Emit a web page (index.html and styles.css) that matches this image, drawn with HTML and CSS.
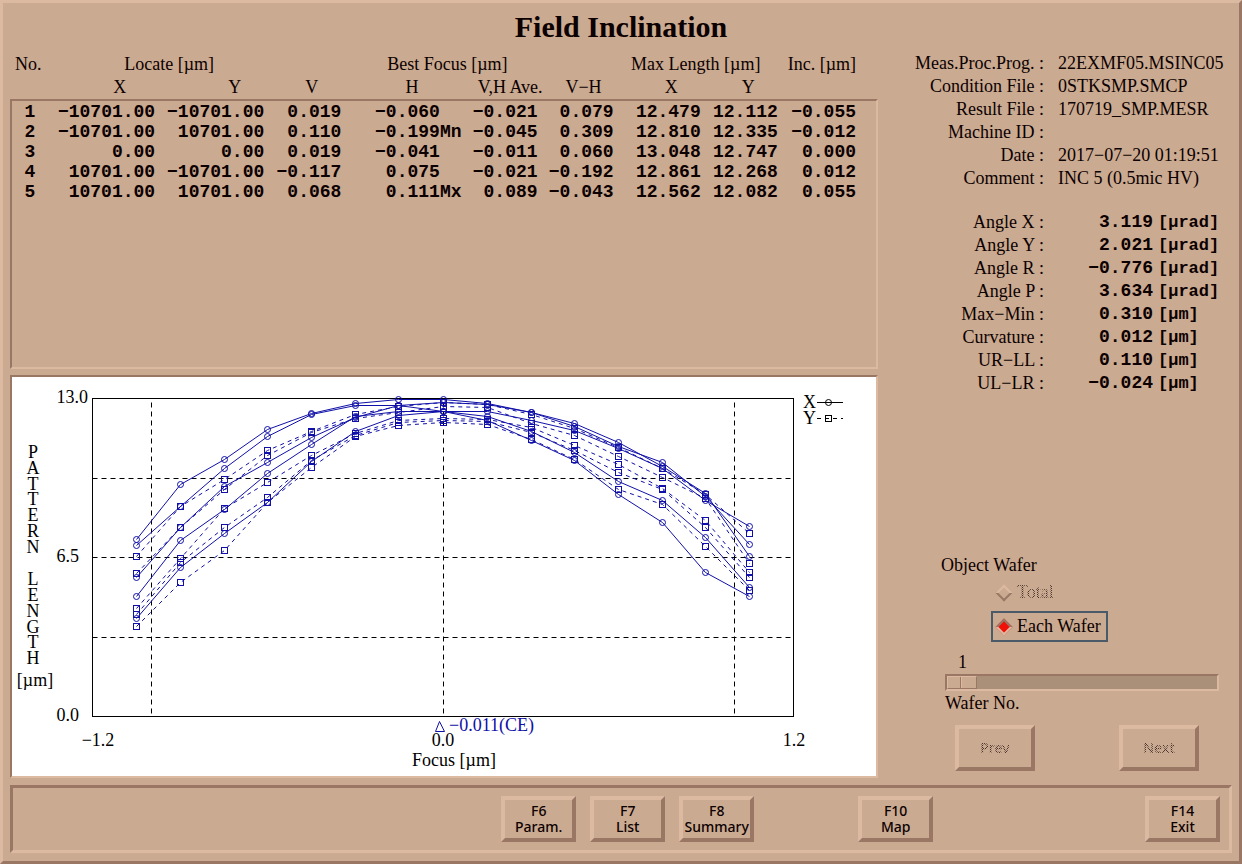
FILE: index.html
```html
<!DOCTYPE html>
<html lang="en">
<head>
<meta charset="utf-8">
<title>Field Inclination</title>
<link rel="stylesheet" href="styles.css">
</head>
<body>
<div class="window">
  <h1 class="title">Field Inclination</h1>

  <main class="main">
    <div class="left">
      <section class="results">
        <div class="results-box"></div>
        <table class="results-table">
          <colgroup>
            <col class="c-no"><col class="c-lx"><col class="c-ly"><col class="c-v"><col class="c-h">
            <col class="c-ave"><col class="c-vh"><col class="c-mx"><col class="c-my"><col class="c-inc">
          </colgroup>
          <thead>
            <tr>
              <th class="h-no">No.</th>
              <th class="h-locate" colspan="2">Locate [µm]</th>
              <th class="h-focus" colspan="4">Best Focus [µm]</th>
              <th class="h-length" colspan="2">Max Length [µm]</th>
              <th class="h-inc">Inc. [µm]</th>
            </tr>
            <tr class="sub">
              <th></th>
              <th class="p-wide">X</th>
              <th class="p-mid">Y</th>
              <th class="p-mid">V</th>
              <th class="p-flag">H</th>
              <th>V,H Ave.</th>
              <th class="p-small">V−H</th>
              <th class="p-mid">X</th>
              <th class="p-mid">Y</th>
              <th></th>
            </tr>
          </thead>
          <tbody>
            <tr><td>1</td><td>−10701.00</td><td>−10701.00</td><td>0.019</td><td>−0.060<span class="flag"></span></td><td>−0.021</td><td>0.079</td><td>12.479</td><td>12.112</td><td>−0.055</td></tr>
            <tr><td>2</td><td>−10701.00</td><td>10701.00</td><td>0.110</td><td>−0.199<span class="flag">Mn</span></td><td>−0.045</td><td>0.309</td><td>12.810</td><td>12.335</td><td>−0.012</td></tr>
            <tr><td>3</td><td>0.00</td><td>0.00</td><td>0.019</td><td>−0.041<span class="flag"></span></td><td>−0.011</td><td>0.060</td><td>13.048</td><td>12.747</td><td>0.000</td></tr>
            <tr><td>4</td><td>10701.00</td><td>−10701.00</td><td>−0.117</td><td>0.075<span class="flag"></span></td><td>−0.021</td><td>−0.192</td><td>12.861</td><td>12.268</td><td>0.012</td></tr>
            <tr><td>5</td><td>10701.00</td><td>10701.00</td><td>0.068</td><td>0.111<span class="flag">Mx</span></td><td>0.089</td><td>−0.043</td><td>12.562</td><td>12.082</td><td>0.055</td></tr>
          </tbody>
        </table>
      </section>

      <section class="chart">
        <svg class="chart-svg" viewBox="12 377 864 399" role="img" aria-label="Pattern length against focus">
          <defs>
            <marker id="dot" markerUnits="userSpaceOnUse" markerWidth="9" markerHeight="9" refX="4.5" refY="4.5"><circle class="mark" cx="4.5" cy="4.5" r="3"/></marker>
            <marker id="box" markerUnits="userSpaceOnUse" markerWidth="9" markerHeight="9" refX="4.5" refY="4.5"><rect class="mark" x="1.5" y="1.5" width="6" height="6"/></marker>
          </defs>

          <g class="grid">
            <path d="M92.500 478.500H793.500M92.500 557.500H793.500M92.500 637.500H793.500"/>
            <path d="M151.500 402.500V716.500M443.500 402.500V716.500M734.500 402.500V716.500"/>
          </g>
          <rect class="frame" x="92.500" y="398.500" width="701" height="318"/>

          <g class="series-x">
            <polyline points="136.500,539.500 180.500,484.500 224.500,459.500 267.500,429.500 311.500,413.500 355.500,403.500 398.500,399.500 443.500,399.500 487.500,403.500 531.500,412.500 574.500,423.500 618.500,442.500 662.500,466.500 705.500,493.500 749.500,556.500"/>
            <polyline points="136.500,545.500 180.500,506.500 224.500,468.500 267.500,436.500 311.500,414.500 355.500,405.500 398.500,405.500 443.500,402.500 487.500,404.500 531.500,412.500 574.500,426.500 618.500,446.500 662.500,462.500 705.500,496.500 749.500,544.500"/>
            <polyline points="136.500,577.500 180.500,527.500 224.500,486.500 267.500,462.500 311.500,437.500 355.500,417.500 398.500,405.500 443.500,411.500 487.500,411.500 531.500,420.500 574.500,430.500 618.500,448.500 662.500,468.500 705.500,500.500 749.500,526.500"/>
            <polyline points="136.500,596.500 180.500,540.500 224.500,509.500 267.500,473.500 311.500,444.500 355.500,416.500 398.500,411.500 443.500,411.500 487.500,420.500 531.500,440.500 574.500,460.500 618.500,494.500 662.500,522.500 705.500,572.500 749.500,596.500"/>
            <polyline points="136.500,618.500 180.500,567.500 224.500,533.500 267.500,502.500 311.500,461.500 355.500,431.500 398.500,415.500 443.500,411.500 487.500,416.500 531.500,431.500 574.500,452.500 618.500,481.500 662.500,500.500 705.500,537.500 749.500,587.500"/>
          </g>
          <g class="series-y">
            <polyline points="136.500,556.500 180.500,506.500 224.500,479.500 267.500,450.500 311.500,431.500 355.500,414.500 398.500,406.500 443.500,402.500 487.500,404.500 531.500,414.500 574.500,428.500 618.500,447.500 662.500,468.500 705.500,494.500 749.500,533.500"/>
            <polyline points="136.500,573.500 180.500,527.500 224.500,489.500 267.500,455.500 311.500,432.500 355.500,418.500 398.500,412.500 443.500,406.500 487.500,407.500 531.500,423.500 574.500,435.500 618.500,456.500 662.500,477.500 705.500,498.500 749.500,563.500"/>
            <polyline points="136.500,608.500 180.500,558.500 224.500,508.500 267.500,482.500 311.500,455.500 355.500,433.500 398.500,420.500 443.500,418.500 487.500,419.500 531.500,427.500 574.500,445.500 618.500,464.500 662.500,488.500 705.500,520.500 749.500,572.500"/>
            <polyline points="136.500,614.500 180.500,562.500 224.500,527.500 267.500,497.500 311.500,460.500 355.500,435.500 398.500,422.500 443.500,420.500 487.500,421.500 531.500,432.500 574.500,450.500 618.500,472.500 662.500,489.500 705.500,527.500 749.500,577.500"/>
            <polyline points="136.500,626.500 180.500,582.500 224.500,550.500 267.500,502.500 311.500,467.500 355.500,436.500 398.500,425.500 443.500,422.500 487.500,424.500 531.500,439.500 574.500,459.500 618.500,489.500 662.500,504.500 705.500,546.500 749.500,590.500"/>
          </g>

          <g class="legend">
            <text x="803" y="408">X</text>
            <path d="M817 402.500H843"/><circle cx="828.500" cy="402.500" r="3"/>
            <text x="803" y="424">Y</text>
            <path class="dashed" d="M817 418.500H843"/><rect x="825.500" y="415.500" width="6" height="6"/>
          </g>

          <g class="axis end">
            <text x="88" y="403">13.0</text>
            <text x="79" y="562">6.5</text>
            <text x="79" y="721">0.0</text>
          </g>
          <g class="axis middle">
            <text x="98" y="746">−1.2</text>
            <text x="443" y="746">0.0</text>
            <text x="794" y="746">1.2</text>
            <text x="454" y="766">Focus [µm]</text>
            <text x="35" y="686">[µm]</text>
            <text><tspan x="33" y="458">P</tspan><tspan x="33" y="474">A</tspan><tspan x="33" y="490">T</tspan><tspan x="33" y="505">T</tspan><tspan x="33" y="521">E</tspan><tspan x="33" y="537">R</tspan><tspan x="33" y="553">N</tspan></text>
            <text><tspan x="33" y="585">L</tspan><tspan x="33" y="601">E</tspan><tspan x="33" y="617">N</tspan><tspan x="33" y="633">G</tspan><tspan x="33" y="648">T</tspan><tspan x="33" y="664">H</tspan></text>
          </g>
          <g class="centre">
            <path d="M439.500 721.500L435.500 731.500H444.500Z"/>
            <text x="449" y="731">−0.011(CE)</text>
          </g>
        </svg>
      </section>
    </div>

    <aside class="side">
      <dl class="info">
        <dt>Meas.Proc.Prog. :</dt><dd>22EXMF05.MSINC05</dd>
        <dt>Condition File :</dt><dd>0STKSMP.SMCP</dd>
        <dt>Result File :</dt><dd>170719_SMP.MESR</dd>
        <dt>Machine ID :</dt><dd></dd>
        <dt>Date :</dt><dd>2017−07−20 01:19:51</dd>
        <dt>Comment :</dt><dd>INC 5 (0.5mic HV)</dd>
      </dl>
      <dl class="info measures">
        <dt>Angle X :</dt><dd><span class="num">3.119</span><span class="unit">[µrad]</span></dd>
        <dt>Angle Y :</dt><dd><span class="num">2.021</span><span class="unit">[µrad]</span></dd>
        <dt>Angle R :</dt><dd><span class="num">−0.776</span><span class="unit">[µrad]</span></dd>
        <dt>Angle P :</dt><dd><span class="num">3.634</span><span class="unit">[µrad]</span></dd>
        <dt>Max−Min :</dt><dd><span class="num">0.310</span><span class="unit">[µm]</span></dd>
        <dt>Curvature :</dt><dd><span class="num">0.012</span><span class="unit">[µm]</span></dd>
        <dt>UR−LL :</dt><dd><span class="num">0.110</span><span class="unit">[µm]</span></dd>
        <dt>UL−LR :</dt><dd><span class="num">−0.024</span><span class="unit">[µm]</span></dd>
      </dl>

      <form class="controls">
        <fieldset class="wafer">
          <legend>Object Wafer</legend>
          <label class="option" for="total"><input class="diamond" type="radio" id="total" name="wafer" disabled><span class="stipple">Total</span></label>
          <label class="option current" for="each"><input class="diamond" type="radio" id="each" name="wafer" checked><span>Each Wafer</span></label>
        </fieldset>
        <div class="slider">
          <output class="slider-value" for="wafer-no">1</output>
          <input class="range" type="range" id="wafer-no" min="1" max="25" value="1">
          <label for="wafer-no">Wafer No.</label>
        </div>
        <div class="step">
          <button class="button" type="button" disabled><span class="stipple">Prev</span></button>
          <button class="button" type="button" disabled><span class="stipple">Next</span></button>
        </div>
      </form>
    </aside>
  </main>

  <footer class="keys">
    <button class="button key-first" type="button">F6<br>Param.</button>
    <button class="button" type="button">F7<br>List</button>
    <button class="button" type="button">F8<br>Summary</button>
    <button class="button key-map" type="button">F10<br>Map</button>
    <button class="button key-exit" type="button">F14<br>Exit</button>
  </footer>
</div>
</body>
</html>
```
FILE: styles.css
```css
:root {
  --face: #caaa90;
  --light: #dcbaa2;
  --dark: #997764;
  --trough: #ab9079;
  --ink: #0c0000;
  --blue: #1010a8;
  --serif: "Liberation Serif", "Times New Roman", serif;
  --mono: "Liberation Mono", "Courier New", monospace;
  --sans: "Noto Sans", "Open Sans", sans-serif;
}

* { box-sizing: border-box; }

body {
  margin: 0;
  background: var(--face);
  color: var(--ink);
  font: 18px/23px var(--serif);
}

.window {
  display: flex;
  flex-direction: column;
  min-height: 100vh;
  padding: 0 7px 8px;
  border: 3px solid;
  border-color: var(--light) var(--dark) var(--dark) var(--light);
}

.title {
  margin: 0;
  padding-top: 7px;
  height: 49px;
  font-size: 30px;
  line-height: 34px;
  text-align: center;
}

.main {
  flex: 1;
  display: grid;
  grid-template-columns: 868fr 354fr;
}

.left {
  display: flex;
  flex-direction: column;
  gap: 6px;
}

/* Results table: the sunken box sits behind the body rows */
.results {
  flex: 1;
  display: grid;
  grid-template-rows: 47px 1fr;
}

.results-box {
  grid-area: 2 / 1;
  border: 2px solid;
  border-color: var(--dark) var(--light) var(--light) var(--dark);
}

.results-table {
  grid-area: 1 / 1 / 3 / 2;
  align-self: start;
  width: 100%;
  table-layout: fixed;
  border-collapse: collapse;
}

.c-no { width: 40px; }
.c-lx { width: 105px; }
.c-ly { width: 109px; }
.c-v { width: 77px; }
.c-h { width: 120px; }
.c-ave { width: 81px; }
.c-vh { width: 71px; }
.c-mx { width: 87px; }
.c-my { width: 77px; }
.c-inc { width: 100px; }

.results-table th,
.results-table td {
  padding: 0;
  text-align: right;
  white-space: nowrap;
}

.results-table th {
  height: 24px;
  font-weight: normal;
}

.results-table .sub th {
  height: 26px;
  vertical-align: top;
}

.results-table td {
  height: 20px;
  font: bold 18px/20px var(--mono);
}

.results-table td:first-child { text-align: center; }
.results-table td:nth-child(6) { padding-right: 5px; }
.results-table td:last-child,
.results-table .h-inc { padding-right: 22px; }

.results-table .h-no { padding-left: 5px; text-align: left; }
.results-table .h-locate { padding-left: 24px; text-align: center; }
.results-table .h-focus { padding-left: 17px; text-align: center; }
.results-table .h-length { text-align: center; }
.results-table .p-wide { padding-right: 29px; }
.results-table .p-mid { padding-right: 23px; }
.results-table .p-small { padding-right: 12px; }
.results-table .p-flag { padding-right: 43px; }

.flag {
  display: inline-block;
  width: 2ch;
}

/* Chart */
.chart {
  background: #fff;
  border: 2px solid;
  border-color: var(--dark) var(--light) var(--light) var(--dark);
}

.chart-svg {
  display: block;
  width: 100%;
  height: auto;
  font: 18px var(--serif);
}

.grid path { stroke: #000; stroke-dasharray: 5 4; }
.frame { fill: none; stroke: #000; }
.mark { fill: none; stroke: var(--blue); }

.series-x polyline,
.series-y polyline {
  fill: none;
  stroke: var(--blue);
}

.series-x polyline {
  marker-start: url(#dot);
  marker-mid: url(#dot);
  marker-end: url(#dot);
}

.series-y polyline {
  stroke-dasharray: 4 4;
  marker-start: url(#box);
  marker-mid: url(#box);
  marker-end: url(#box);
}

.legend path,
.legend circle,
.legend rect { fill: none; stroke: #000; }
.legend .dashed { stroke-dasharray: 4 4; }
.end { text-anchor: end; }
.middle { text-anchor: middle; }
.centre path { fill: none; stroke: var(--blue); }
.centre text { fill: var(--blue); }

/* Side column */
.side {
  display: flex;
  flex-direction: column;
}

.info {
  display: grid;
  grid-template-columns: 166px 1fr;
  grid-auto-rows: 23px;
  column-gap: 14px;
  margin: 0;
  white-space: nowrap;
}

.info dt { text-align: right; }
.info dd { margin: 0; }

.measures { margin-top: 21px; }
.measures dd { font: bold 18px/23px var(--mono); }

.num {
  display: inline-block;
  width: 95px;
  margin-right: 5px;
  text-align: right;
}

.unit { font-size: 17px; }

.controls {
  margin-top: auto;
  padding: 0 13px 7px 67px;
}

.wafer {
  display: flex;
  flex-direction: column;
  align-items: flex-start;
  gap: 3px;
  margin: 0;
  padding: 0 0 0 46px;
  border: 0;
}

.wafer legend {
  margin-left: -50px;
  padding: 0;
}

.option {
  display: flex;
  align-items: center;
  gap: 7px;
  height: 31px;
  padding: 0 5px 0 4px;
  border: 2px solid transparent;
}

.current { border-color: #4a5a68; }

.diamond {
  appearance: none;
  width: 12px;
  height: 12px;
  margin: 0 0 0 1px;
  border: 2px solid;
  border-color: var(--light) var(--dark) var(--dark) var(--light);
  transform: rotate(45deg);
}

.diamond:checked {
  background: #f01008;
  border-color: var(--dark) var(--light) var(--light) var(--dark);
}

/* Disabled captions are drawn through a checkerboard */
.stipple {
  color: transparent;
  background: repeating-conic-gradient(#4a3430 0 25%, #caaa90 0 50%) 0 0 / 2px 2px;
  background-clip: text;
}

.slider {
  display: flex;
  flex-direction: column;
  padding-top: 9px;
}

.slider-value { padding-left: 13px; }

.range {
  appearance: none;
  width: 100%;
  height: 17px;
  margin: 0 0 1px;
  background: var(--trough);
  border: 2px solid;
  border-color: var(--dark) var(--light) var(--light) var(--dark);
}

.range::-webkit-slider-thumb {
  appearance: none;
  width: 30px;
  height: 13px;
  background: linear-gradient(90deg, transparent 12px, var(--dark) 12px 13px, var(--light) 13px 14px, transparent 14px) var(--face);
  border: 1px solid;
  border-color: var(--light) var(--dark) var(--dark) var(--light);
}

.step {
  display: flex;
  justify-content: space-between;
  padding: 10px 20px 0 10px;
}

/* Buttons */
.button {
  width: 75px;
  height: 46px;
  padding: 0;
  background: var(--face);
  border: 4px solid;
  border-color: var(--light) var(--dark) var(--dark) var(--light);
  color: var(--ink);
  font: 500 14px/16px var(--sans);
  white-space: nowrap;
}

.step .button { width: 80px; }

.keys {
  display: flex;
  gap: 14px;
  margin-top: 7px;
  padding: 8px 9px;
  border: 3px solid;
  border-color: var(--dark) var(--light) var(--light) var(--dark);
}

.key-first { margin-left: 40%; }
.key-map { margin-left: 90px; }
.key-exit { margin-left: auto; }
```
